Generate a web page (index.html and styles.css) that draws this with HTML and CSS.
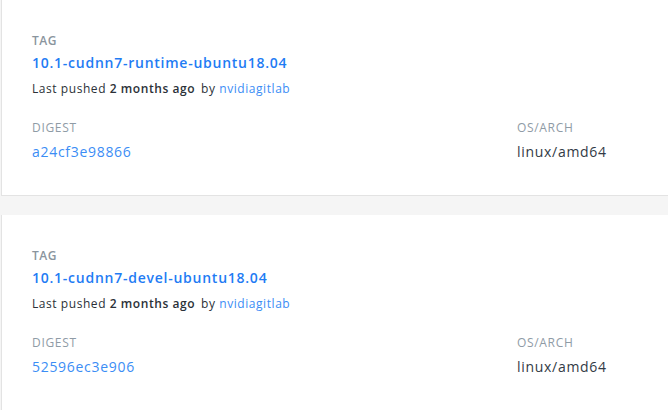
FILE: index.html
```html
<!DOCTYPE html>
<html>
<head>
<meta charset="utf-8">
<link rel="stylesheet" href="styles.css">
</head>
<body>
<div class="list">
  <div class="card">
    <div class="tag-label">TAG</div>
    <div class="tag-name">10.1-cudnn7-runtime-ubuntu18.04</div>
    <div class="meta">Last pushed <b>2 months ago</b><span class="by">by <span class="user">nvidiagitlab</span></span></div>
    <div class="row">
      <div class="col digest">
        <div class="label">DIGEST</div>
        <div class="value link">a24cf3e98866</div>
      </div>
      <div class="col">
        <div class="label">OS/ARCH</div>
        <div class="value">linux/amd64</div>
      </div>
    </div>
  </div>
  <div class="card">
    <div class="tag-label">TAG</div>
    <div class="tag-name">10.1-cudnn7-devel-ubuntu18.04</div>
    <div class="meta">Last pushed <b>2 months ago</b><span class="by">by <span class="user">nvidiagitlab</span></span></div>
    <div class="row">
      <div class="col digest">
        <div class="label">DIGEST</div>
        <div class="value link">52596ec3e906</div>
      </div>
      <div class="col">
        <div class="label">OS/ARCH</div>
        <div class="value">linux/amd64</div>
      </div>
    </div>
  </div>
</div>
</body>
</html>
```
FILE: styles.css
```css
html, body {
  margin: 0;
  padding: 0;
  background: #f5f5f5;
  font-family: "Open Sans", "Liberation Sans", sans-serif;
}
.list {
  display: flex;
  flex-direction: column;
  gap: 19px;
  padding-left: 1px;
  overflow: hidden;
}
.card {
  background: #fff;
  border-left: 1px solid #e3e3e3;
  border-bottom: 1px solid #e3e3e3;
  padding: 33px 0 33px 30px;
}
.tag-label {
  font-size: 12px;
  line-height: 16px;
  font-weight: 600;
  letter-spacing: 0.5px;
  color: #8a959e;
}
.tag-name {
  margin-top: 4px;
  font-size: 14px;
  line-height: 20px;
  font-weight: 600;
  letter-spacing: 0.75px;
  color: #1f7cf4;
}
.meta {
  margin-top: 7px;
  font-size: 12px;
  line-height: 18px;
  letter-spacing: 0.56px;
  color: #2b3138;
}
.meta b {
  font-weight: 600;
}
.by {
  margin-left: 6px;
}
.user {
  color: #3b8df5;
}
.row {
  display: flex;
  margin-top: 21px;
}
.col.digest {
  width: 485px;
}
.label {
  font-size: 12px;
  line-height: 18px;
  letter-spacing: 0.67px;
  color: #8f9ba6;
}
.value {
  margin-top: 5px;
  font-size: 14px;
  line-height: 20px;
  letter-spacing: 0.7px;
  color: #323a45;
}
.value.link {
  color: #3b8df5;
}
```
